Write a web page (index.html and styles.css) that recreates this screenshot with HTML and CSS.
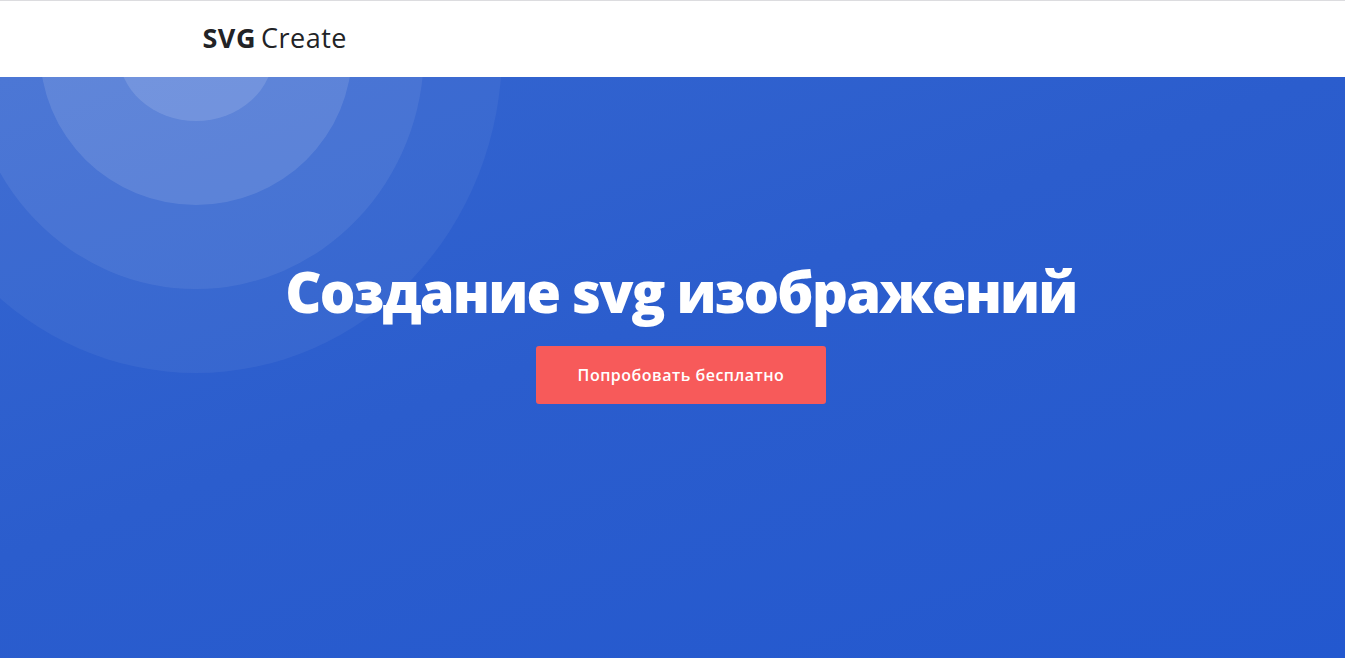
FILE: index.html
```html
<!DOCTYPE html>
<html lang="ru">
<head>
<meta charset="utf-8">
<title>SVGCreate</title>
<link rel="stylesheet" href="styles.css">
</head>
<body>
<header class="header">
  <div class="container header-inner">
    <a class="logo" href="#"><span class="logo-bold">SVG</span><span class="logo-light">Create</span></a>
  </div>
</header>
<section class="hero">
  <svg class="hero-bg" width="620" height="420" viewBox="0 0 620 420" aria-hidden="true">
    <ellipse cx="196" cy="-26" rx="306" ry="322" fill="#ffffff" fill-opacity="0.05"/>
    <ellipse cx="196" cy="-26" rx="228" ry="238" fill="#ffffff" fill-opacity="0.07"/>
    <ellipse cx="196" cy="-26" rx="156" ry="154" fill="#ffffff" fill-opacity="0.115"/>
    <ellipse cx="196" cy="-26" rx="78" ry="70" fill="#ffffff" fill-opacity="0.13"/>
  </svg>
  <div class="container hero-inner">
    <h1 class="hero-title">Создание svg изображений</h1>
    <a class="btn" href="#">Попробовать бесплатно</a>
  </div>
</section>
</body>
</html>
```
FILE: styles.css
```css
* { box-sizing: border-box; }
html, body { margin: 0; padding: 0; }
body {
  font-family: "Open Sans", "Noto Sans", sans-serif;
  background: #2a5dcd;
  overflow: hidden;
}
.container {
  width: 940px;
  margin: 0 auto;
}
.header {
  height: 77px;
  background: #fff;
  border-top: 1px solid #dcdcdf;
}
.header-inner {
  height: 76px;
  display: flex;
  align-items: center;
}
.logo {
  text-decoration: none;
  color: #222326;
  font-size: 27px;
  line-height: 1;
  letter-spacing: 0.5px;
  display: flex;
  gap: 5px;
  margin-top: -3px;
}
.logo-bold { font-weight: 700; }
.logo-light { font-weight: 400; }
.hero {
  position: relative;
  height: 581px;
  background: linear-gradient(160deg, #3566d0 0%, #2b5dcd 45%, #2358cf 100%);
  overflow: hidden;
}
.hero-bg {
  position: absolute;
  left: 0;
  top: 0;
}
.hero-inner {
  position: relative;
  display: flex;
  flex-direction: column;
  align-items: center;
  padding-top: 181px;
  padding-left: 17px;
}
.hero-title {
  margin: 0;
  color: #fff;
  font-size: 56px;
  line-height: 67px;
  font-weight: 800;
  letter-spacing: -1.8px;
  white-space: nowrap;
}
.btn {
  margin-top: 21px;
  width: 290px;
  height: 58px;
  display: flex;
  align-items: center;
  justify-content: center;
  background: #f75a5a;
  color: #fff;
  text-decoration: none;
  font-size: 16px;
  font-weight: 600;
  letter-spacing: 0.5px;
  border-radius: 3px;
}
```
